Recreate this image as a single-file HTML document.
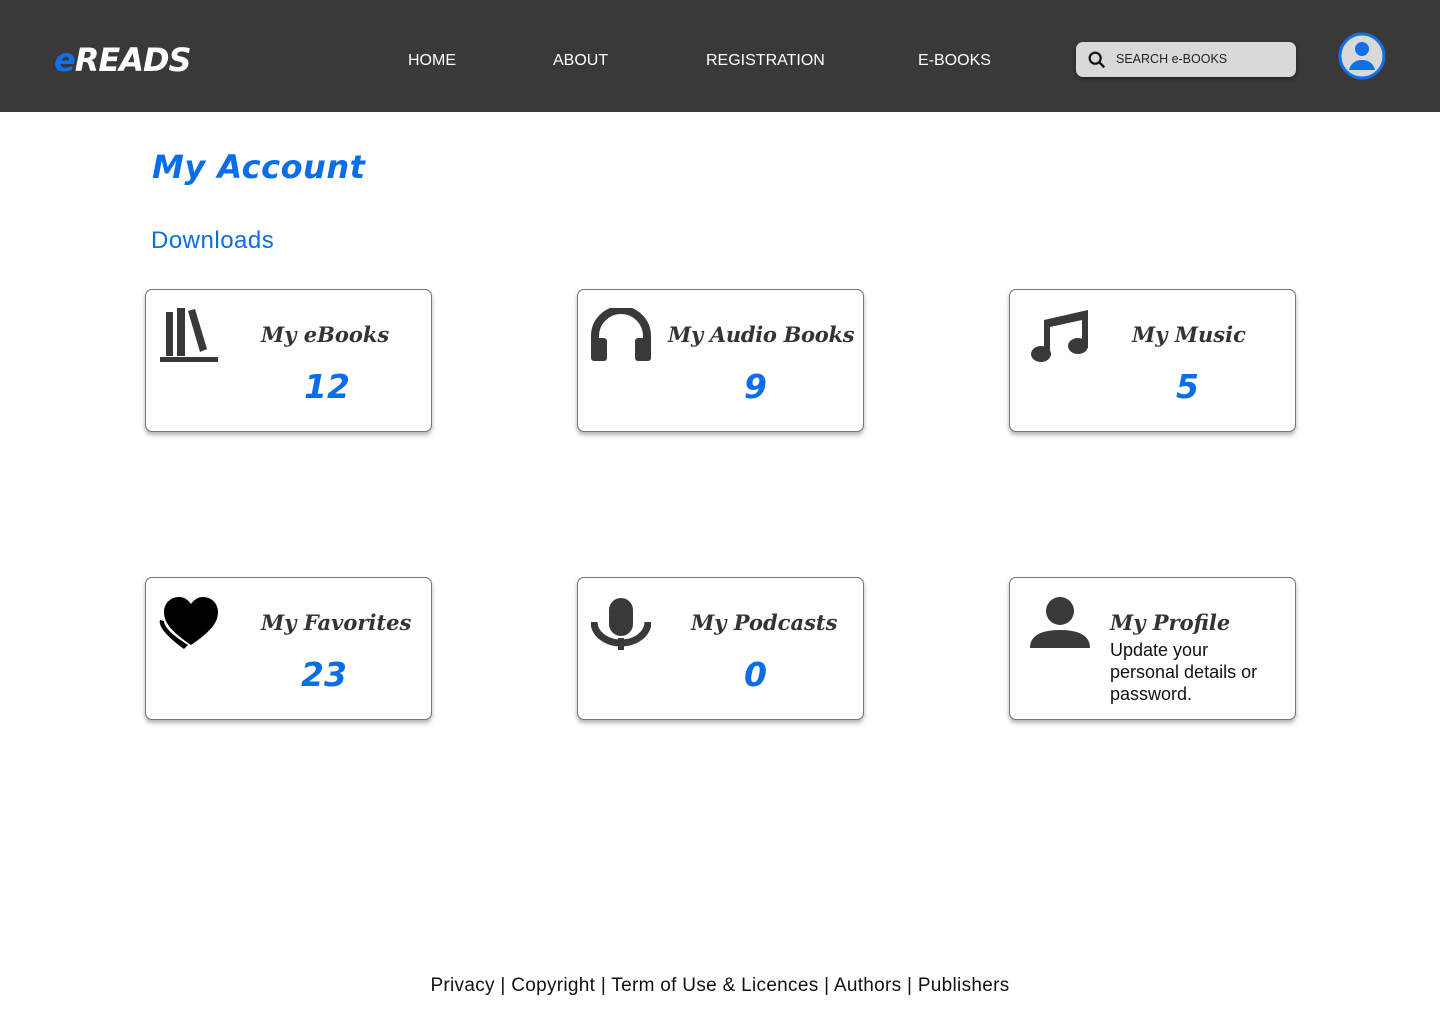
<!DOCTYPE html>
<html><head><meta charset="utf-8"><style>
*{margin:0;padding:0;box-sizing:border-box}
body{width:1440px;height:1024px;background:#fff;font-family:"Liberation Sans",sans-serif;position:relative;overflow:hidden}
.hdr{position:absolute;left:0;top:0;width:1440px;height:112px;background:#3a3839}
.logo{position:absolute;left:54px;top:41px;font-size:32px;font-weight:900;font-style:italic;color:#fff;letter-spacing:-1px;font-family:"DejaVu Sans","Liberation Sans",sans-serif}
.logo span{color:#1170e8}
.nav{position:absolute;top:52px;color:#fff;font-size:16px}
.search{position:absolute;left:1076px;top:42px;width:220px;height:35px;background:#d9d9d9;border-radius:7px;box-shadow:0 2px 4px rgba(0,0,0,.4)}
.search span{position:absolute;left:40px;top:10px;font-size:12.5px;color:#222}
.title{position:absolute;left:152px;top:148px;font-size:32px;font-weight:bold;font-style:italic;color:#0a6ee8;font-family:"DejaVu Sans",sans-serif;letter-spacing:0.5px}
.dl{position:absolute;left:151px;top:227px;font-size:24px;letter-spacing:0.5px;color:#0a6ee8}
.card{position:absolute;width:287px;height:143px;border:1px solid #777;border-radius:7px;background:#fff;box-shadow:0 3px 4px rgba(0,0,0,.3)}
.card svg{position:absolute}
.ct{position:absolute;font-size:21px;font-weight:bold;font-style:italic;color:#353334;font-family:"DejaVu Serif",serif;white-space:nowrap}
.cn{position:absolute;font-size:33px;font-weight:bold;font-style:italic;color:#0a6ee8;font-family:"DejaVu Sans",sans-serif}
.foot{position:absolute;top:975px;left:0;width:1440px;text-align:center;font-size:19px;letter-spacing:0.3px;color:#111}
</style></head><body>
<div class="hdr">
<div class="logo"><span>e</span>READS</div>
<div class="nav" style="left:408px">HOME</div>
<div class="nav" style="left:553px">ABOUT</div>
<div class="nav" style="left:706px">REGISTRATION</div>
<div class="nav" style="left:918px">E-BOOKS</div>
<div class="search"><svg width="22" height="22" style="position:absolute;left:10px;top:7px" viewBox="0 0 24 24"><circle cx="10" cy="10" r="6" fill="none" stroke="#111" stroke-width="2.4"/><path d="M14.5 14.5L20 20" stroke="#111" stroke-width="2.6"/></svg><span>SEARCH e-BOOKS</span></div>
<svg width="48" height="48" style="position:absolute;left:1338px;top:32px" viewBox="0 0 48 48"><circle cx="24" cy="24" r="22" fill="#d9d9d9" stroke="#1170e8" stroke-width="3"/><circle cx="24" cy="17" r="7" fill="#1170e8"/><path d="M11 38c2-8 8-10 13-10s11 2 13 10z" fill="#1170e8"/></svg>
</div>
<div class="title">My Account</div>
<div class="dl">Downloads</div>

<div class="card" style="left:145px;top:289px">
<svg width="60" height="56" style="left:13px;top:18px" viewBox="0 0 60 56"><rect x="7" y="4" width="7" height="44" fill="#3a3839"/><rect x="18" y="0" width="8" height="48" fill="#3a3839"/><path d="M29 3l7-2 12 40-7 3z" fill="#3a3839"/><rect x="1" y="49" width="58" height="5" fill="#3a3839"/></svg>
<div class="ct" style="left:115px;top:32px">My eBooks</div>
<div class="cn" style="left:158px;top:77px">12</div></div>

<div class="card" style="left:577px;top:289px">
<svg width="60" height="54" style="left:13px;top:18px" viewBox="0 0 60 54"><path d="M4 50V28a26 26 0 0 1 52 0v22" fill="none" stroke="#3a3839" stroke-width="8"/><rect x="0" y="30" width="16" height="23" rx="3" fill="#3a3839"/><rect x="44" y="30" width="16" height="23" rx="3" fill="#3a3839"/></svg>
<div class="ct" style="left:90px;top:32px;letter-spacing:-0.3px">My Audio Books</div>
<div class="cn" style="left:166px;top:77px">9</div></div>

<div class="card" style="left:1009px;top:289px">
<svg width="60" height="56" style="left:20px;top:18px" viewBox="0 0 60 56"><path d="M14 12L58 2v38h-6V12L20 19v30h-6z" fill="#3a3839"/><ellipse cx="11" cy="46" rx="10" ry="8" fill="#3a3839"/><ellipse cx="48" cy="38" rx="10" ry="8" fill="#3a3839"/></svg>
<div class="ct" style="left:122px;top:32px">My Music</div>
<div class="cn" style="left:166px;top:77px">5</div></div>

<div class="card" style="left:145px;top:577px">
<svg width="62" height="56" style="left:12px;top:17px" viewBox="0 0 62 56"><path d="M2 25c-2 6 6 16 24 29l4-4C14 40 6 32 6 26z" fill="#000"/><path d="M33 50C14 37 6 28 6 17 6 8 13 2 21 2c6 0 10 4 12 7 2-3 6-7 12-7 8 0 15 6 15 15 0 11-8 20-27 33z" fill="#000"/></svg>
<div class="ct" style="left:115px;top:32px">My Favorites</div>
<div class="cn" style="left:155px;top:77px">23</div></div>

<div class="card" style="left:577px;top:577px">
<svg width="60" height="56" style="left:13px;top:18px" viewBox="0 0 60 56"><rect x="18" y="2" width="24" height="38" rx="12" fill="#3a3839"/><path d="M3 26a27 21 0 0 0 54 0" fill="none" stroke="#3a3839" stroke-width="7"/><rect x="27" y="42" width="6" height="12" fill="#3a3839"/></svg>
<div class="ct" style="left:113px;top:32px">My Podcasts</div>
<div class="cn" style="left:166px;top:77px">0</div></div>

<div class="card" style="left:1009px;top:577px">
<svg width="60" height="54" style="left:20px;top:18px" viewBox="0 0 60 54"><circle cx="30" cy="15" r="14" fill="#3a3839"/><path d="M0 52c0-14 14-18 30-18s30 4 30 18z" fill="#3a3839"/></svg>
<div class="ct" style="left:100px;top:32px">My Profile</div>
<div style="position:absolute;left:100px;top:61px;font-size:18px;line-height:22px;color:#111;width:165px">Update your personal details or password.</div></div>

<div class="foot">Privacy | Copyright | Term of Use &amp; Licences | Authors | Publishers</div>
</body></html>
